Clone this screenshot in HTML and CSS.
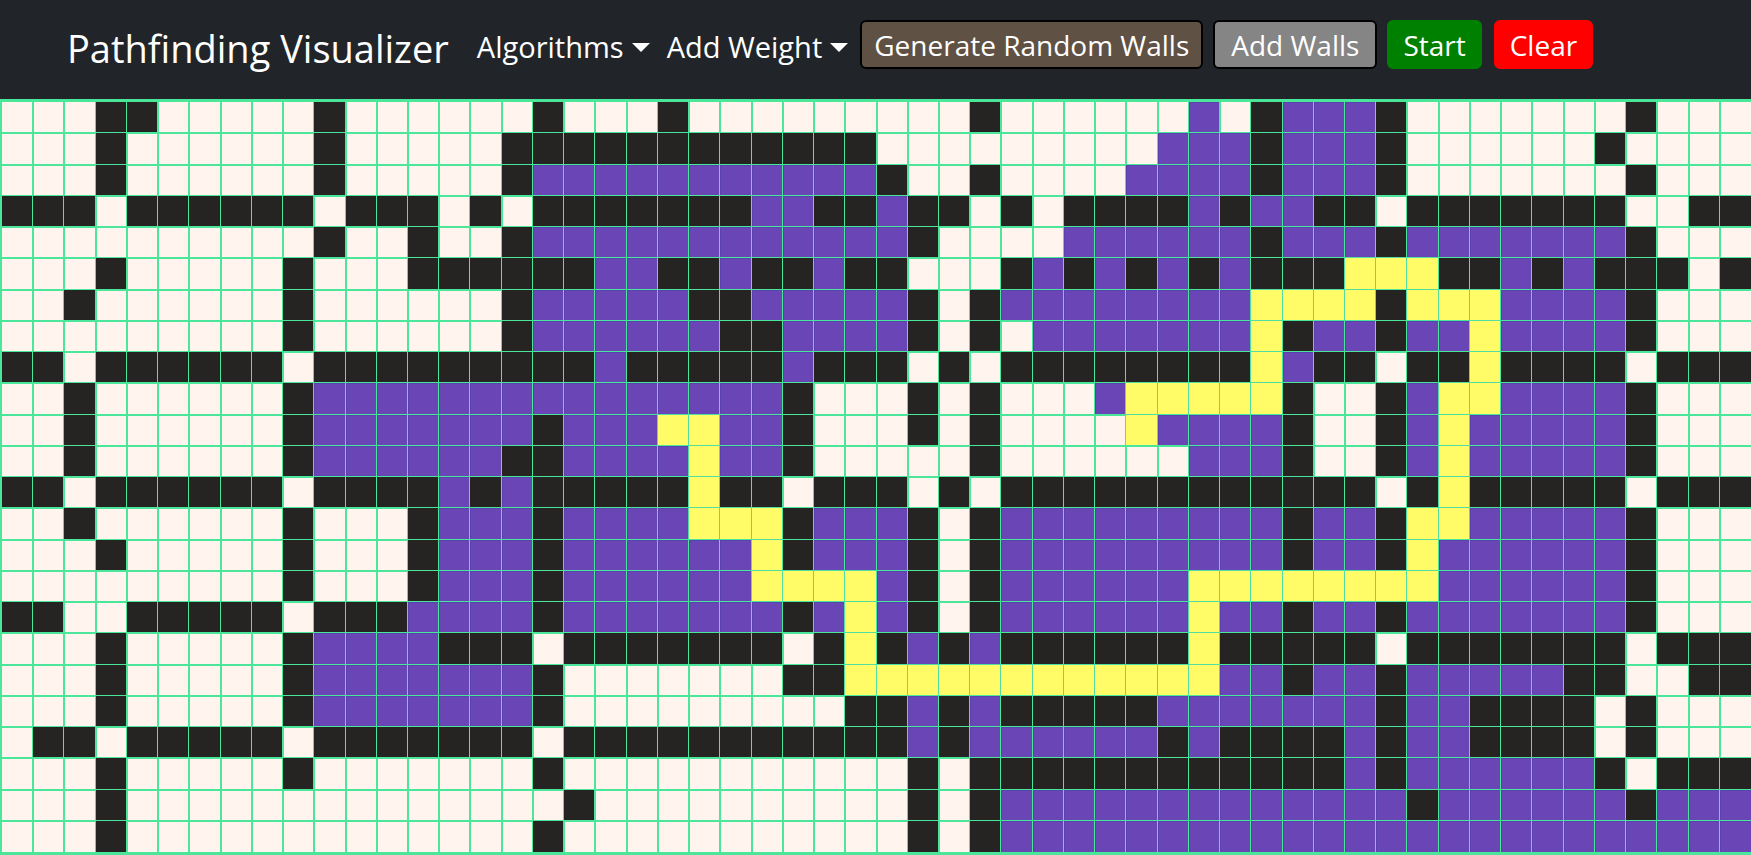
FILE: index.html
```html
<!DOCTYPE html>
<html lang="en">
<head>
  <meta charset="utf-8">
  <title>Pathfinding Visualizer</title>
  <link rel="stylesheet" href="styles.css">
</head>
<body>
  <nav class="navbar">
    <a class="brand" href="#">Pathfinding Visualizer</a>
    <div class="menus">
      <button class="menu" type="button" aria-haspopup="true">Algorithms<span class="caret"></span></button>
      <button class="menu" type="button" aria-haspopup="true">Add Weight<span class="caret"></span></button>
    </div>
    <div class="actions">
      <button class="btn btn-random" type="button">Generate Random Walls</button>
      <button class="btn btn-walls" type="button">Add Walls</button>
      <button class="btn btn-start" type="button">Start</button>
      <button class="btn btn-clear" type="button">Clear</button>
    </div>
  </nav>
  <main class="board" id="board"></main>
  <script src="board.js"></script>
</body>
</html>
```
FILE: styles.css
```css
* { box-sizing: border-box; }

body {
  margin: 0;
  min-height: 100vh;
  display: flex;
  flex-direction: column;
  font-family: "Segoe UI", "Open Sans", "Noto Sans", sans-serif;
  color: #fff;
  background: #fff4ee;
}

.navbar {
  display: flex;
  align-items: flex-start;
  height: 99px;
  padding: 20px 0 0 67px;
  background: #212529;
}

.brand {
  margin-right: 28px;
  color: #fff;
  font-size: 38px;
  line-height: 56px;
  text-decoration: none;
  white-space: nowrap;
}

.menus {
  display: flex;
  gap: 17px;
  margin-right: 12px;
}

.menu {
  display: flex;
  align-items: center;
  gap: 8px;
  padding: 0;
  border: 0;
  background: none;
  color: #fff;
  font: inherit;
  font-size: 29px;
  line-height: 54px;
  white-space: nowrap;
}

.caret {
  border-top: 9px solid #fff;
  border-left: 9px solid transparent;
  border-right: 9px solid transparent;
}

.actions {
  display: flex;
  gap: 10px;
}

.btn {
  height: 49px;
  padding: 2px 14px 0;
  border: 2px solid #000;
  border-radius: 6px;
  color: #fff;
  font: inherit;
  font-size: 28px;
  line-height: 43px;
  white-space: nowrap;
}

.btn-random { padding: 2px 12px 0; background: #5f5144; }
.btn-walls { padding: 2px 16px 0; background: #858585; }
.btn-start { border-color: #008000; background: #008000; }
.btn-clear { margin-left: 2px; border-color: #f00; background: #f00; }

.board {
  flex: 1;
  display: grid;
  grid-template-columns: repeat(56, minmax(0, 1fr));
  grid-auto-rows: minmax(0, 1fr);
  padding: 2px 1px 4px 1px;
  background: #4ae79a;
}

.cell {
  border: 0 solid #4ae79a;
  border-width: 2px 0 0 2px;
  background: #fff4ee;
}

.wall, .visited, .path { border-width: 1px 0 0 1px; }
.wall { background: #252422; }
.visited { background: #6a45b5; box-shadow: inset 1px 1px #5843ae; }
.path { border-color: #50dfa0; background: #fffc68; }

.cell.first-row { border-top-width: 1px; }
.cell.first-col { border-left-width: 1px; }
.cell.last-col { margin-right: -1px; }
.cell.last-row { margin-bottom: -1px; }
```
FILE: board.js
```javascript
// Each row is run-length encoded: "." open, "#" wall, "v" visited, "y" path.
const rows = [
  "3. 2# 5. 1# 6. 1# 3. 1# 9. 1# 6. 1v 1. 1# 3v 1# 7. 1# 3.",
  "3. 1# 6. 1# 5. 12# 9. 3v 1# 3v 1# 6. 1# 4.",
  "3. 1# 6. 1# 5. 1# 11v 1# 2. 1# 4. 4v 1# 3v 1# 7. 1# 3.",
  "3# 1. 6# 1. 3# 1. 1# 1. 7# 2v 2# 1v 2# 1. 1# 1. 4# 1v 1# 2v 2# 1. 7# 2. 2#",
  "10. 1# 2. 1# 2. 1# 12v 1# 4. 6v 1# 3v 1# 7v 1# 3.",
  "3. 1# 5. 1# 3. 6# 2v 2# 1v 2# 1v 2# 3. 1# 1v 1# 1v 1# 1v 1# 1v 3# 3y 2# 1v 1# 1v 3# 1. 1#",
  "2. 1# 6. 1# 6. 1# 5v 2# 5v 1# 1. 1# 8v 4y 1# 3y 4v 1# 3.",
  "9. 1# 6. 1# 6v 2# 4v 1# 1. 1# 1. 7v 1y 1# 2v 1# 2v 1y 4v 1# 3.",
  "2# 1. 6# 1. 9# 1v 5# 1v 3# 1. 1# 1. 8# 1y 1v 2# 1. 2# 1y 4# 1. 3#",
  "2. 1# 6. 1# 15v 1# 3. 1# 1. 1# 3. 1v 5y 1# 2. 1# 1v 2y 4v 1# 3.",
  "2. 1# 6. 1# 7v 1# 3v 2y 2v 1# 3. 1# 1. 1# 4. 1y 4v 1# 2. 1# 1v 1y 5v 1# 3.",
  "2. 1# 6. 1# 6v 2# 4v 1y 2v 1# 5. 1# 6. 3v 1# 2. 1# 1v 1y 5v 1# 3.",
  "2# 1. 6# 1. 4# 1v 1# 1v 5# 1y 2# 1. 3# 1. 1# 1. 12# 1. 1# 1y 5# 1. 3#",
  "2. 1# 6. 1# 3. 1# 3v 1# 4v 3y 1# 3v 1# 1. 1# 9v 1# 2v 1# 2y 5v 1# 3.",
  "3. 1# 5. 1# 3. 1# 3v 1# 6v 1y 1# 3v 1# 1. 1# 9v 1# 2v 1# 1y 6v 1# 3.",
  "9. 1# 3. 1# 3v 1# 6v 4y 1v 1# 1. 1# 6v 8y 6v 1# 3.",
  "2# 2. 5# 1. 3# 4v 1# 7v 1# 1v 1y 1v 1# 1. 1# 6v 1y 2v 1# 2v 1# 7v 1# 3.",
  "3. 1# 5. 1# 4v 3# 1. 7# 1. 1# 1y 1# 1v 1# 1v 6# 1y 5# 1. 7# 1. 3#",
  "3. 1# 5. 1# 7v 1# 7. 2# 12y 2v 1# 2v 1# 5v 2# 2. 2#",
  "3. 1# 5. 1# 7v 1# 9. 2# 1v 1# 1v 5# 7v 1# 2v 4# 1. 1# 3.",
  "1. 2# 1. 5# 1. 7# 1. 11# 1v 1# 6v 1# 1v 4# 1v 1# 2v 4# 1. 1# 3.",
  "3. 1# 5. 1# 7. 1# 11. 1# 1. 12# 1v 1# 6v 1# 1. 3#",
  "3. 1# 14. 1# 10. 1# 1. 1# 13v 1# 6v 1# 3v",
  "3. 1# 13. 1# 11. 1# 1. 1# 24v"
];

const kinds = { "#": "wall", "v": "visited", "y": "path" };
const columns = 56;
const board = document.getElementById("board");

rows.forEach((row, r) => {
  const cells = row.split(" ").map(run => run.slice(-1).repeat(parseInt(run, 10))).join("");
  for (let c = 0; c < columns; c++) {
    const cell = document.createElement("div");
    cell.className = "cell";
    if (kinds[cells[c]]) cell.classList.add(kinds[cells[c]]);
    if (r === 0) cell.classList.add("first-row");
    if (r === rows.length - 1) cell.classList.add("last-row");
    if (c === 0) cell.classList.add("first-col");
    if (c === columns - 1) cell.classList.add("last-col");
    board.append(cell);
  }
});
```
